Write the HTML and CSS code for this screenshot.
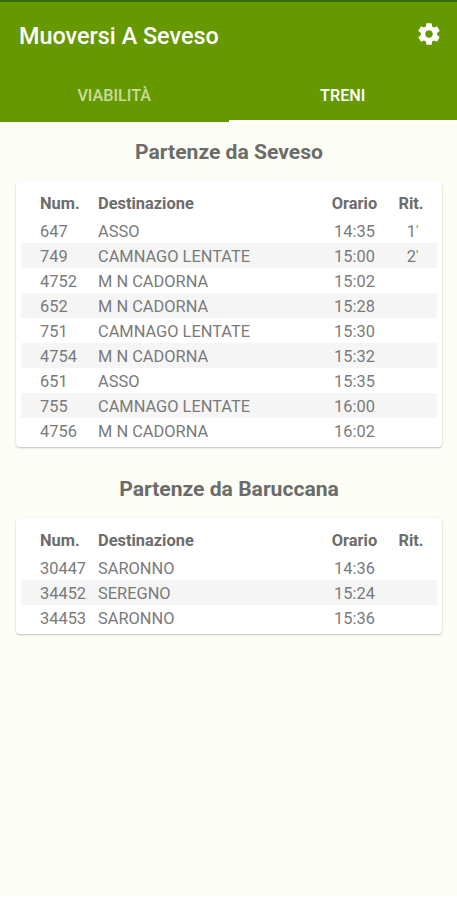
FILE: index.html
```html
<!DOCTYPE html>
<html lang="it">
<head>
<meta charset="utf-8">
<title>Muoversi A Seveso</title>
<link rel="stylesheet" href="styles.css">
</head>
<body>
<header class="appbar">
  <div class="toolbar">
    <h1>Muoversi A Seveso</h1>
    <svg class="gear" viewBox="0 0 24 24"><path fill="#fff" d="M19.43 12.98c.04-.32.07-.64.07-.98s-.03-.66-.07-.98l2.11-1.65c.19-.15.24-.42.12-.64l-2-3.46c-.12-.22-.39-.3-.61-.22l-2.49 1c-.52-.4-1.08-.73-1.69-.98l-.38-2.65C14.46 2.18 14.25 2 14 2h-4c-.25 0-.46.18-.49.42l-.38 2.65c-.61.25-1.17.59-1.69.98l-2.49-1c-.23-.09-.49 0-.61.22l-2 3.46c-.13.22-.07.49.12.64l2.11 1.65c-.04.32-.07.65-.07.98s.03.66.07.98l-2.11 1.65c-.19.15-.24.42-.12.64l2 3.46c.12.22.39.3.61.22l2.49-1c.52.4 1.08.73 1.69.98l.38 2.65c.03.24.24.42.49.42h4c.25 0 .46-.18.49-.42l.38-2.65c.61-.25 1.17-.59 1.69-.98l2.49 1c.23.09.49 0 .61-.22l2-3.46c.12-.22.07-.49-.12-.64l-2.11-1.65zM12 15.5c-1.93 0-3.5-1.57-3.5-3.5s1.57-3.5 3.5-3.5 3.5 1.57 3.5 3.5-1.57 3.5-3.5 3.5z"/></svg>
  </div>
  <nav class="tabs"><span class="tab">VIABILITÀ</span><span class="tab active">TRENI</span></nav>
</header>
<main>
  <h2>Partenze da Seveso</h2>
  <section class="card">
    <div class="row head"><span>Num.</span><span>Destinazione</span><span>Orario</span><span>Rit.</span></div>
    <div class="row"><span>647</span><span>ASSO</span><span>14:35</span><span>1<small>'</small></span></div>
    <div class="row"><span>749</span><span>CAMNAGO LENTATE</span><span>15:00</span><span>2<small>'</small></span></div>
    <div class="row"><span>4752</span><span>M N CADORNA</span><span>15:02</span><span></span></div>
    <div class="row"><span>652</span><span>M N CADORNA</span><span>15:28</span><span></span></div>
    <div class="row"><span>751</span><span>CAMNAGO LENTATE</span><span>15:30</span><span></span></div>
    <div class="row"><span>4754</span><span>M N CADORNA</span><span>15:32</span><span></span></div>
    <div class="row"><span>651</span><span>ASSO</span><span>15:35</span><span></span></div>
    <div class="row"><span>755</span><span>CAMNAGO LENTATE</span><span>16:00</span><span></span></div>
    <div class="row"><span>4756</span><span>M N CADORNA</span><span>16:02</span><span></span></div>
  </section>
  <h2>Partenze da Baruccana</h2>
  <section class="card">
    <div class="row head"><span>Num.</span><span>Destinazione</span><span>Orario</span><span>Rit.</span></div>
    <div class="row"><span>30447</span><span>SARONNO</span><span>14:36</span><span></span></div>
    <div class="row"><span>34452</span><span>SEREGNO</span><span>15:24</span><span></span></div>
    <div class="row"><span>34453</span><span>SARONNO</span><span>15:36</span><span></span></div>
  </section>
</main>
</body>
</html>
```
FILE: styles.css
```css
* { box-sizing: border-box; }
body { margin: 0; height: 900px; overflow: hidden; background: #fcfef5; font-family: Roboto, sans-serif; color: #7a7a7a; display: flex; flex-direction: column; }
.appbar { height: 122px; background: #669900; border-top: 2px solid #336b12; color: #fff; flex: none; }
.toolbar { height: 66px; padding: 0 15px 0 19px; display: flex; align-items: center; justify-content: space-between; }
h1 { margin: 2px 0 0; font-size: 23.4px; font-weight: 500; line-height: 30px; }
.gear { width: 26px; height: 26px; margin-bottom: 2px; }
.tabs { height: 54px; display: flex; }
.tab { flex: 1; text-align: center; font-size: 16.2px; font-weight: 500; line-height: 56px; color: #c8dc9c; border-bottom: 2px solid transparent; }
.tab.active { color: #fff; border-bottom-color: #fff; }
main { flex: 1; padding: 0 15px 0 16px; border-bottom: 5px solid #fff; }
h2 { margin: 0; height: 59px; line-height: 59px; font-size: 21.1px; font-weight: 700; text-align: center; color: #6b6b69; }
.card { background: #fff; border-radius: 4px; padding: 6px 5px 4px; box-shadow: 0 1px 2px rgba(0,0,0,.25); }
.card + h2 { height: 71px; line-height: 84px; }
.row { display: grid; grid-template-columns: 58px 216px 81px 32px; padding-left: 19px; height: 25px; line-height: 28px; font-size: 16.4px; }
.row span:nth-child(3), .row span:nth-child(4) { text-align: center; }
.row span:nth-child(4) { white-space: nowrap; }
.row:not(.head) span:nth-child(4) { padding-left: 3px; }
.row small { font-size: 13px; vertical-align: 2px; line-height: 1; }
.row:nth-child(odd) { background: #f5f5f5; }
.row.head { height: 31px; line-height: 34px; font-size: 16.4px; font-weight: 700; background: none; color: #6c6c6c; }
```
